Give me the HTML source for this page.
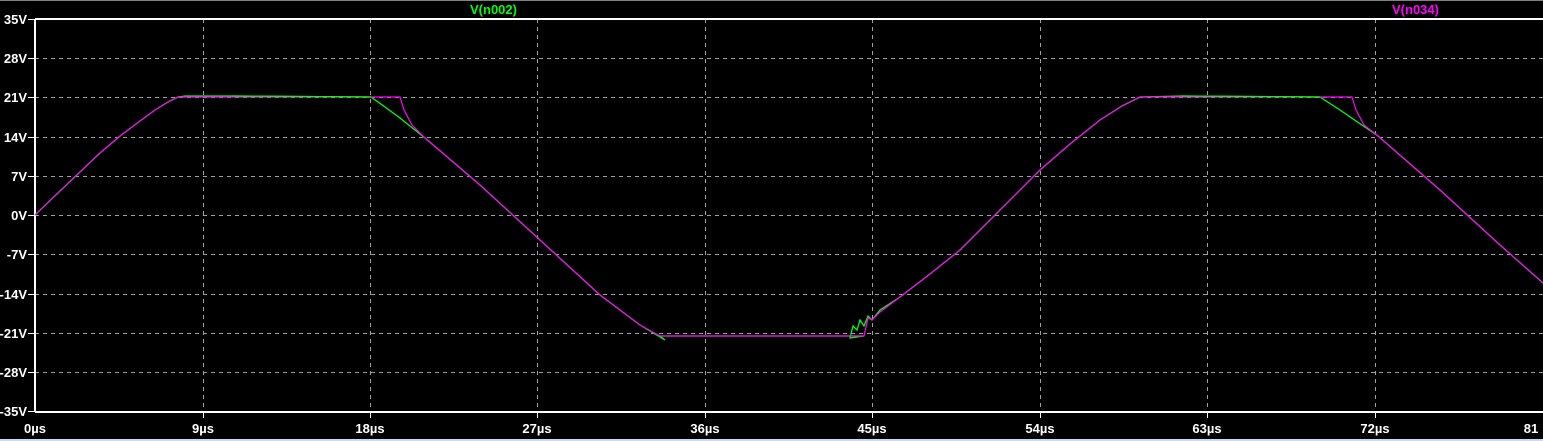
<!DOCTYPE html>
<html><head><style>
html,body{margin:0;padding:0;background:#000;width:1543px;height:441px;overflow:hidden}
text{font-family:"Liberation Sans",sans-serif;font-size:13px;font-weight:bold}
</style></head><body>
<svg width="1543" height="441" xmlns="http://www.w3.org/2000/svg">
<rect width="1543" height="441" fill="#000"/>
<rect x="0" y="0" width="1543" height="1" fill="#808080"/>
<rect x="0" y="439" width="1543" height="2" fill="#c8dcf0"/>
<g stroke="#a0a0a0" stroke-width="1" stroke-dasharray="4,4">
<line x1="35" y1="58.5" x2="1543" y2="58.5"/>
<line x1="35" y1="97.5" x2="1543" y2="97.5"/>
<line x1="35" y1="137.5" x2="1543" y2="137.5"/>
<line x1="35" y1="176.5" x2="1543" y2="176.5"/>
<line x1="35" y1="215.5" x2="1543" y2="215.5"/>
<line x1="35" y1="254.5" x2="1543" y2="254.5"/>
<line x1="35" y1="294.5" x2="1543" y2="294.5"/>
<line x1="35" y1="333.5" x2="1543" y2="333.5"/>
<line x1="35" y1="372.5" x2="1543" y2="372.5"/>
<line x1="203.5" y1="19" x2="203.5" y2="412"/>
<line x1="370.5" y1="19" x2="370.5" y2="412"/>
<line x1="537.5" y1="19" x2="537.5" y2="412"/>
<line x1="705.5" y1="19" x2="705.5" y2="412"/>
<line x1="872.5" y1="19" x2="872.5" y2="412"/>
<line x1="1040.5" y1="19" x2="1040.5" y2="412"/>
<line x1="1207.5" y1="19" x2="1207.5" y2="412"/>
<line x1="1375.5" y1="19" x2="1375.5" y2="412"/>
</g>
<g stroke="#fff" stroke-width="2" fill="none">
<line x1="35" y1="19" x2="1543" y2="19"/>
<line x1="35" y1="412" x2="1543" y2="412"/>
<line x1="35" y1="19" x2="35" y2="412"/>
</g>
<g stroke="#fff" stroke-width="1">
<line x1="28" y1="19.5" x2="35" y2="19.5"/><line x1="28" y1="58.5" x2="35" y2="58.5"/>
<line x1="28" y1="97.5" x2="35" y2="97.5"/><line x1="28" y1="137.5" x2="35" y2="137.5"/>
<line x1="28" y1="176.5" x2="35" y2="176.5"/><line x1="28" y1="215.5" x2="35" y2="215.5"/>
<line x1="28" y1="254.5" x2="35" y2="254.5"/><line x1="28" y1="294.5" x2="35" y2="294.5"/>
<line x1="28" y1="333.5" x2="35" y2="333.5"/><line x1="28" y1="372.5" x2="35" y2="372.5"/>
<line x1="28" y1="411.5" x2="35" y2="411.5"/>
<line x1="203.5" y1="412" x2="203.5" y2="418"/><line x1="370.5" y1="412" x2="370.5" y2="418"/>
<line x1="537.5" y1="412" x2="537.5" y2="418"/><line x1="705.5" y1="412" x2="705.5" y2="418"/>
<line x1="872.5" y1="412" x2="872.5" y2="418"/><line x1="1040.5" y1="412" x2="1040.5" y2="418"/>
<line x1="1207.5" y1="412" x2="1207.5" y2="418"/><line x1="1375.5" y1="412" x2="1375.5" y2="418"/>
</g>
<g fill="#fff" text-anchor="end">
<text x="27" y="24">35V</text><text x="27" y="63">28V</text><text x="27" y="102">21V</text>
<text x="27" y="142">14V</text><text x="27" y="181">7V</text><text x="27" y="220">0V</text>
<text x="27" y="259">-7V</text><text x="27" y="299">-14V</text><text x="27" y="338">-21V</text>
<text x="27" y="377">-28V</text><text x="27" y="416">-35V</text>
</g>
<g fill="#fff" text-anchor="middle">
<text x="35" y="433">0µs</text><text x="203" y="433">9µs</text><text x="370" y="433">18µs</text>
<text x="537" y="433">27µs</text><text x="705" y="433">36µs</text><text x="872" y="433">45µs</text>
<text x="1040" y="433">54µs</text><text x="1207" y="433">63µs</text><text x="1375" y="433">72µs</text>
<text x="1531" y="433">81</text>
</g>
<text x="470" y="14" fill="#00ff00">V(n002)</text>
<text x="1392" y="14" fill="#ff00ff">V(n034)</text>
<polyline fill="none" stroke="#00ff00" stroke-width="1.3" points="35,215 60,191 80,172 100,153 120,136 140,121 155,110 168,102 178,97 185,96 232,96 371,97 385,107 400,118 425,138 480,185 540,240 600,295 640,325 665,340 660,336 864,336 850,338 853,326 857,330 860,320 864,326 868,316 872,320 880,310 900,297 930,274 960,250 1000,210 1040,170 1070,144 1100,120 1122,106 1140,97 1182,96 1320,97 1340,110 1378,136 1440,190 1500,245 1543,283"/>
<polyline fill="none" stroke="#ff00ff" stroke-width="1.2" points="35,215 60,191 80,172 100,153 120,136 140,121 155,110 168,102 178,97 185,97 400,97 404,110 412,125 425,138 480,185 540,240 600,295 640,325 660,336 864,336 868,318 872,320 880,312 900,297 930,274 960,250 1000,210 1040,170 1070,144 1100,120 1122,106 1140,97 1352,97 1356,110 1364,125 1378,136 1440,190 1500,245 1543,283"/>
<polyline fill="none" stroke="#00ff00" stroke-width="1.3" points="232,96 371,97"/>
<polyline fill="none" stroke="#00ff00" stroke-width="1.3" points="1182,96 1320,97"/>
</svg>
</body></html>
